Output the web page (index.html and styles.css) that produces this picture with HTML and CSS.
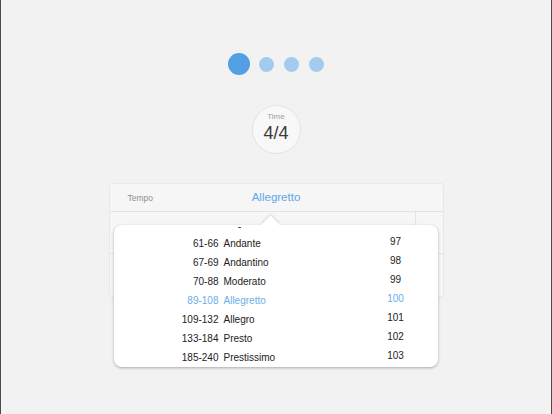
FILE: index.html
```html
<!DOCTYPE html>
<html lang="en">
  <head>
    <meta charset="UTF-8" />
    <title>Metronome • Tempo</title>
    <meta name="viewport" content="width=device-width, initial-scale=1.0" />
    <link rel="stylesheet" href="styles.css">
  </head>
  <body>
    <div class="screen">
      <!-- page indicator -->
      <div class="pager">
        <span class="dot active"></span>
        <span class="dot"></span>
        <span class="dot"></span>
        <span class="dot"></span>
      </div>

      <div class="time-badge">
        <span class="time-label">Time</span>
        <span class="time-value">4/4</span>
      </div>

      <section class="card">
        <div class="card-head">
          <span class="head-label">Tempo</span>
          <span class="head-value">Allegretto</span>
        </div>
        <div class="card-row">
          <div class="cell-main"></div>
          <div class="cell-side"></div>
        </div>
        <div class="card-row last"></div>

        <!-- tempo picker popover -->
        <div class="popover">
          <span class="arrow"></span>
          <span class="clip-mark"></span>
          <ul class="tempo-list">
            <li><span class="range">61-66</span><span class="name">Andante</span><span class="bpm">97</span></li>
            <li><span class="range">67-69</span><span class="name">Andantino</span><span class="bpm">98</span></li>
            <li><span class="range">70-88</span><span class="name">Moderato</span><span class="bpm">99</span></li>
            <li class="selected"><span class="range">89-108</span><span class="name">Allegretto</span><span class="bpm">100</span></li>
            <li><span class="range">109-132</span><span class="name">Allegro</span><span class="bpm">101</span></li>
            <li><span class="range">133-184</span><span class="name">Presto</span><span class="bpm">102</span></li>
            <li><span class="range">185-240</span><span class="name">Prestissimo</span><span class="bpm">103</span></li>
          </ul>
        </div>
      </section>
    </div>
  </body>
</html>
```

FILE: styles.css
```css
/* --- Reset & base --- */
*, *::before, *::after {
  box-sizing: border-box;
  margin: 0;
  padding: 0;
}
body {
  font-family: "Liberation Sans", Arial, sans-serif;
  color: #222;
  background: #f2f2f2;
}

.screen {
  width: 552px;
  height: 414px;
  border-left: 1px solid #4a4a4a;
  border-right: 1px solid #4a4a4a;
  display: flex;
  flex-direction: column;
  align-items: center;
  padding-top: 53px;
}

/* --- Pager dots --- */
.pager {
  display: flex;
  align-items: center;
  gap: 10px;
  height: 22px;
  margin-left: -1px;
}
.dot {
  width: 15px;
  height: 15px;
  border-radius: 50%;
  background: #a3cbef;
}
.dot.active {
  width: 22px;
  height: 22px;
  background: #529fe4;
  margin-right: -1px;
}

/* --- Time signature --- */
.time-badge {
  margin-top: 30px;
  width: 49px;
  height: 49px;
  border-radius: 50%;
  background: #f8f8f8;
  border: 1px solid #e3e3e3;
  display: flex;
  flex-direction: column;
  align-items: center;
  padding-top: 6px;
}
.time-label {
  font-size: 8px;
  color: #a0a0a0;
  line-height: 10px;
}
.time-value {
  font-size: 18px;
  color: #3a3a3a;
  line-height: 20px;
  margin-top: 1px;
}

/* --- Tempo card --- */
.card {
  position: relative;
  margin-top: 29px;
  width: 335px;
  background: #f6f6f6;
  border: 1px solid #e8e8e8;
  border-radius: 3px;
}
.card-head {
  position: relative;
  height: 28px;
  display: flex;
  align-items: center;
  justify-content: center;
  border-bottom: 1px solid #e4e4e4;
}
.head-label {
  position: absolute;
  left: 18px;
  font-size: 8.5px;
  color: #8e8e8e;
}
.head-value {
  font-size: 11.5px;
  color: #5fa7e8;
  margin-top: -1px;
}
.card-row {
  display: flex;
  height: 42px;
  border-bottom: 1px solid #e4e4e4;
}
.card-row.last {
  border-bottom: none;
  height: 42px;
}
.cell-main {
  flex: 1;
}
.cell-side {
  width: 28px;
  border-left: 1px solid #e4e4e4;
}

/* --- Popover --- */
.popover {
  position: absolute;
  left: 4px;
  top: 41px;
  width: 324px;
  height: 142px;
  background: #fff;
  border-radius: 8px;
  box-shadow: 0 1px 3px rgba(0, 0, 0, 0.3);
}
.arrow {
  position: absolute;
  left: 150px;
  top: -7px;
  width: 13px;
  height: 13px;
  background: #fff;
  transform: rotate(45deg);
  transform-origin: center;
  box-shadow: -1px -1px 2px rgba(0, 0, 0, 0.12);
}
.clip-mark {
  position: absolute;
  left: 124px;
  top: 2px;
  width: 3px;
  height: 1px;
  background: #555;
}
.tempo-list {
  position: relative;
  list-style: none;
  padding-top: 9px;
}
.tempo-list li {
  display: grid;
  grid-template-columns: 105px 1fr 40px;
  column-gap: 5px;
  padding-right: 22px;
  height: 19px;
  align-items: center;
  font-size: 10px;
  color: #222;
}
.tempo-list li.selected {
  color: #6aaee9;
}
.range {
  text-align: right;
}
.bpm {
  text-align: center;
  margin-top: -4px;
}
```
